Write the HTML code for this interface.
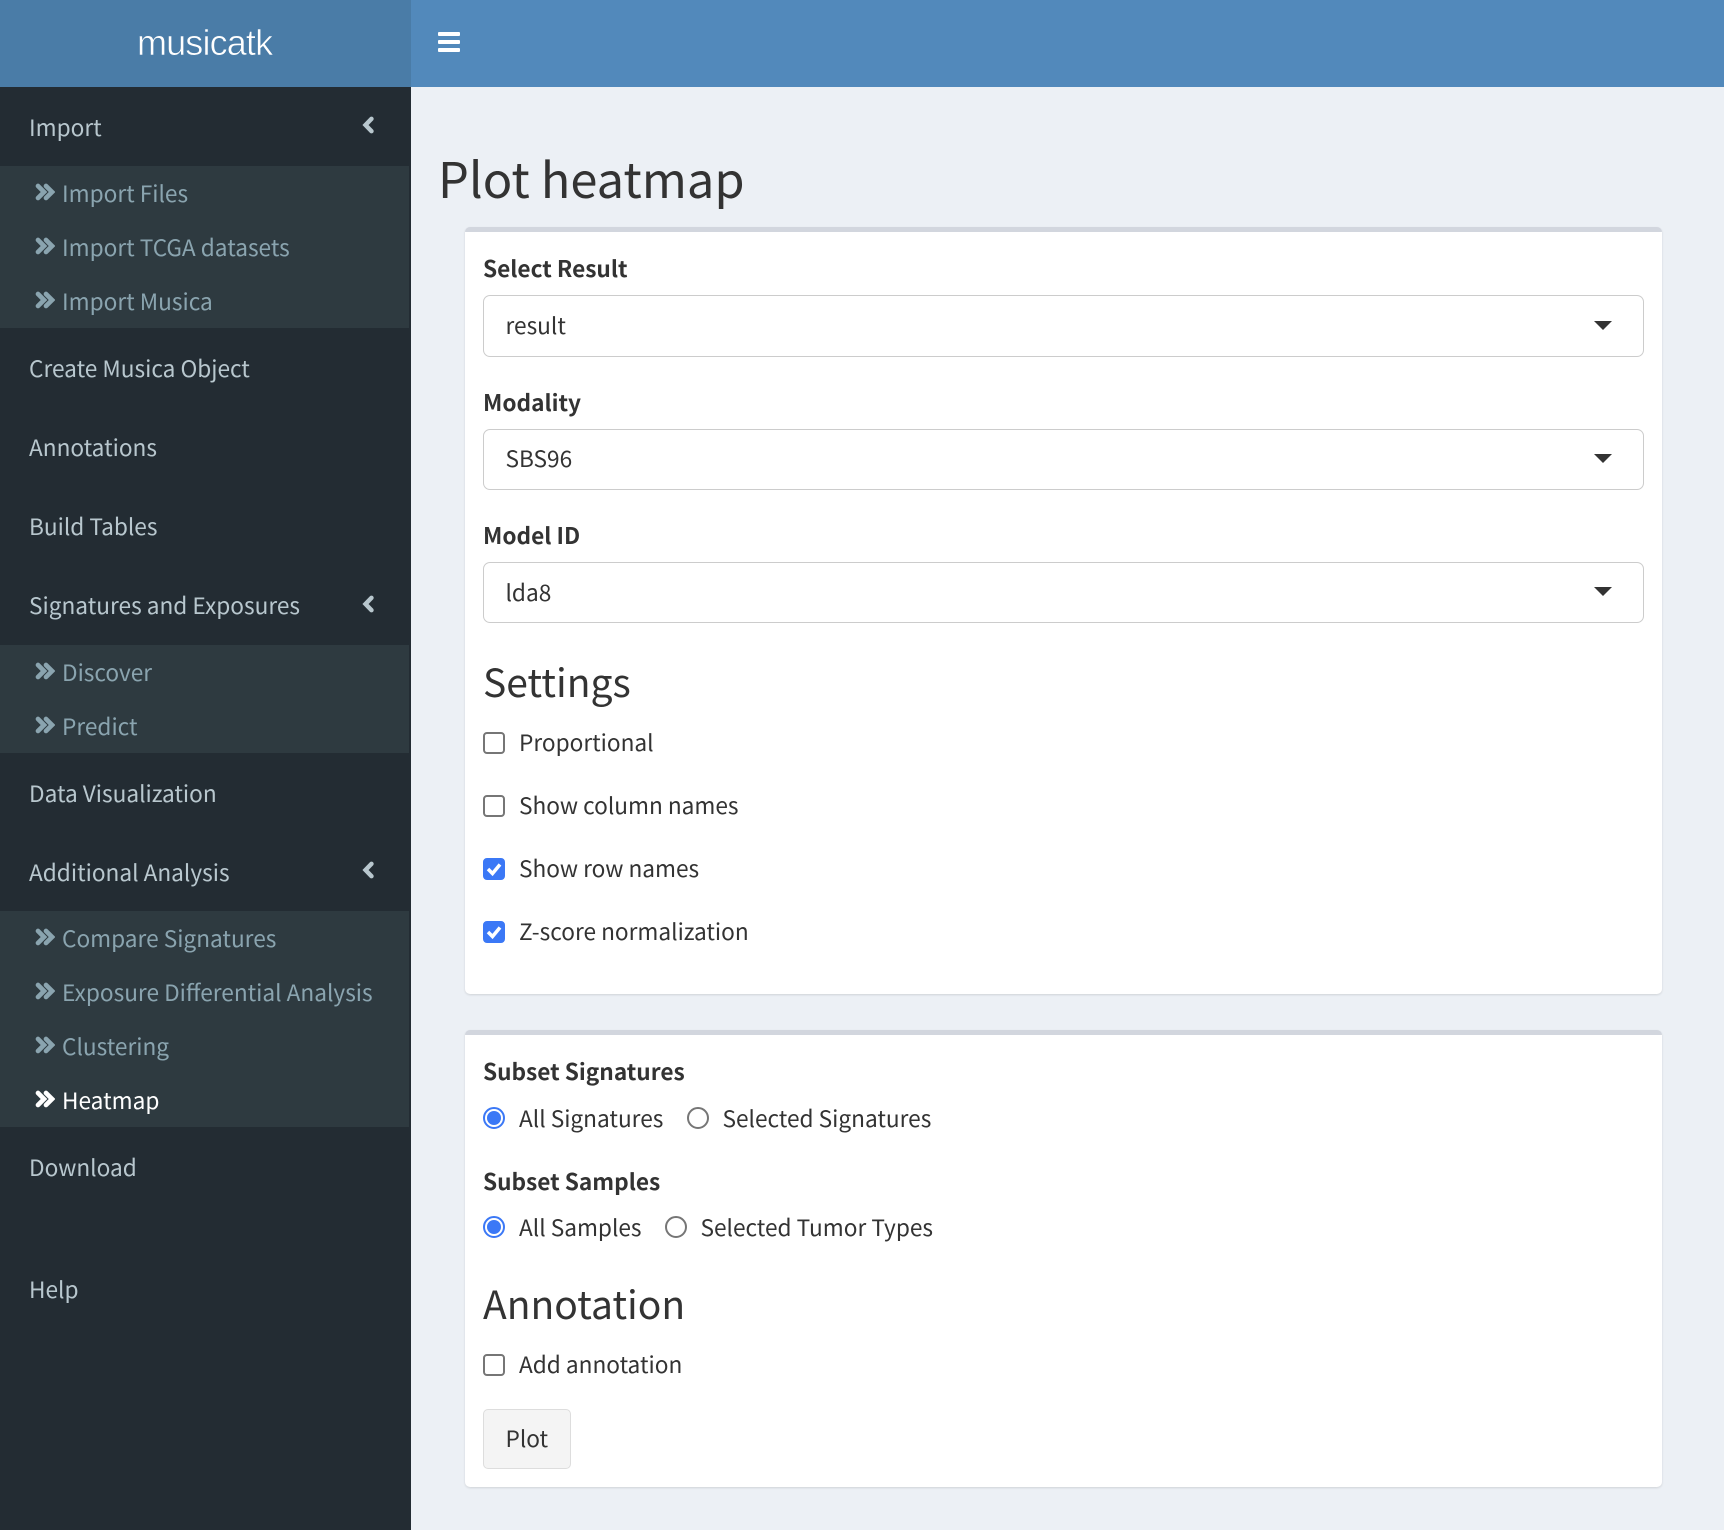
<!DOCTYPE html>
<html><head><meta charset="utf-8"><title>musicatk</title>
<style>
html,body{margin:0;padding:0}
body{width:1724px;height:1530px;position:relative;overflow:hidden;background:#ecf0f5;font-family:"Noto Sans CJK JP","Liberation Sans",sans-serif;font-size:22.65px;color:#333}
.a{position:absolute}
.t{position:absolute;white-space:nowrap;line-height:40px;height:40px}
.m{left:29px;color:#b8c7ce}
.s{left:62px;color:#8aa4af}
.b{font-weight:700;left:483px;color:#333}
.sub{position:absolute;left:0;width:409px;background:#2e3a40}
.box{position:absolute;left:465px;width:1197px;background:#fff;border-top:5px solid #d2d6de;border-radius:5px;box-shadow:0 1px 2px rgba(0,0,0,.12);box-sizing:border-box}
.sel{position:absolute;left:483px;width:1161px;box-sizing:border-box;background:#fff;border:1.5px solid #ccc;border-radius:7px}
.arr{position:absolute;left:1594px;width:0;height:0;border-left:9px solid transparent;border-right:9px solid transparent;border-top:9px solid #333}
.cb{position:absolute;left:483px;width:22px;height:22px;box-sizing:border-box;border:2px solid #767676;border-radius:4px;background:#fff}
.cb.on{background:#3b78f6;border-color:#3b78f6}
.cb svg{position:absolute;left:-2px;top:-2px}
.r{position:absolute;width:22px;height:22px;box-sizing:border-box;border:2px solid #767676;border-radius:50%;background:#fff}
.r.on{border-color:#3b78f6}
.r.on:after{content:"";position:absolute;left:2px;top:2px;width:14px;height:14px;border-radius:50%;background:#3b78f6}
svg{display:block}
</style></head><body>

<div class="a" style="left:411px;top:0;width:1313px;height:87px;background:#5289bb"></div>
<div class="a" style="left:0;top:0;width:411px;height:87px;background:#4a7ca7"></div>
<div class="t" style="left:137px;top:23px;font-family:'Liberation Sans',sans-serif;font-size:36px;letter-spacing:-.85px;color:#fff;-webkit-text-stroke:.6px #4a7ca7">musicatk</div>
<svg class="a" style="left:438px;top:32px" width="23" height="21" viewBox="0 0 23 21"><g fill="#fff"><rect width="22" height="4" y="0" rx="1"/><rect width="22" height="4" y="8" rx="1"/><rect width="22" height="4" y="16" rx="1"/></g></svg>

<div class="a" style="left:0;top:87px;width:411px;height:1443px;background:#232c33"></div>
<div class="sub" style="top:166px;height:162px"></div>
<div class="sub" style="top:645px;height:108px"></div>
<div class="sub" style="top:911px;height:216px"></div>

<div class="t m" style="top:107px">Import</div>
<div class="t s" style="top:173px">Import Files</div>
<div class="t s" style="top:227px">Import TCGA datasets</div>
<div class="t s" style="top:281px">Import Musica</div>
<div class="t m" style="top:348px">Create Musica Object</div>
<div class="t m" style="top:427px">Annotations</div>
<div class="t m" style="top:506px">Build Tables</div>
<div class="t m" style="top:585px">Signatures and Exposures</div>
<div class="t s" style="top:652px">Discover</div>
<div class="t s" style="top:706px">Predict</div>
<div class="t m" style="top:773px">Data Visualization</div>
<div class="t m" style="top:852px">Additional Analysis</div>
<div class="t s" style="top:918px">Compare Signatures</div>
<div class="t s" style="top:972px">Exposure Differential Analysis</div>
<div class="t s" style="top:1026px">Clustering</div>
<div class="t s" style="top:1080px;color:#fff">Heatmap</div>
<div class="t m" style="top:1147px">Download</div>
<div class="t m" style="top:1269px">Help</div>

<svg width="0" height="0" style="position:absolute"><defs>
<symbol id="dbl" viewBox="0 0 20 18"><path d="M3 3L9 9L3 15M11 3L17 9L11 15" fill="none" stroke="currentColor" stroke-width="4.700" stroke-linecap="round" stroke-linejoin="miter"/></symbol>
<symbol id="ang" viewBox="0 0 12 18"><path d="M9.500 2.800L3.500 9L9.500 15.200" fill="none" stroke="currentColor" stroke-width="4.400" stroke-linecap="round"/></symbol>
<symbol id="chk" viewBox="0 0 22 22"><path d="M5 11L9.500 15.500L17 6.500" fill="none" stroke="#fff" stroke-width="3.500"/></symbol>
</defs></svg>

<svg class="a" style="left:35px;top:183px;color:#8aa4af" width="20" height="18"><use href="#dbl"/></svg>
<svg class="a" style="left:35px;top:237px;color:#8aa4af" width="20" height="18"><use href="#dbl"/></svg>
<svg class="a" style="left:35px;top:291px;color:#8aa4af" width="20" height="18"><use href="#dbl"/></svg>
<svg class="a" style="left:35px;top:662px;color:#8aa4af" width="20" height="18"><use href="#dbl"/></svg>
<svg class="a" style="left:35px;top:716px;color:#8aa4af" width="20" height="18"><use href="#dbl"/></svg>
<svg class="a" style="left:35px;top:928px;color:#8aa4af" width="20" height="18"><use href="#dbl"/></svg>
<svg class="a" style="left:35px;top:982px;color:#8aa4af" width="20" height="18"><use href="#dbl"/></svg>
<svg class="a" style="left:35px;top:1036px;color:#8aa4af" width="20" height="18"><use href="#dbl"/></svg>
<svg class="a" style="left:35px;top:1090px;color:#fff" width="20" height="18"><use href="#dbl"/></svg>
<svg class="a" style="left:362px;top:116px;color:#b8c7ce" width="12" height="18"><use href="#ang"/></svg>
<svg class="a" style="left:362px;top:595px;color:#b8c7ce" width="12" height="18"><use href="#ang"/></svg>
<svg class="a" style="left:362px;top:861px;color:#b8c7ce" width="12" height="18"><use href="#ang"/></svg>

<div class="t" style="left:438px;top:158px;font-size:48.800px">Plot heatmap</div>

<div class="box" style="top:227px;height:767px"></div>
<div class="box" style="top:1030px;height:457px"></div>

<div class="t b" style="top:248px">Select Result</div>
<div class="sel" style="top:295px;height:62px"></div>
<div class="t" style="left:505.500px;top:305px">result</div>
<div class="arr" style="top:321px"></div>

<div class="t b" style="top:382px">Modality</div>
<div class="sel" style="top:429px;height:61px"></div>
<div class="t" style="left:505.500px;top:438px">SBS96</div>
<div class="arr" style="top:454px"></div>

<div class="t b" style="top:515px">Model ID</div>
<div class="sel" style="top:562px;height:61px"></div>
<div class="t" style="left:505.500px;top:572px">lda8</div>
<div class="arr" style="top:587px"></div>

<div class="t" style="left:483px;top:661px;font-size:39px">Settings</div>

<div class="cb" style="top:732px"></div>
<div class="t" style="left:519px;top:722px">Proportional</div>
<div class="cb" style="top:795px"></div>
<div class="t" style="left:519px;top:785px">Show column names</div>
<div class="cb on" style="top:858px"><svg width="22" height="22"><use href="#chk"/></svg></div>
<div class="t" style="left:519px;top:848px">Show row names</div>
<div class="cb on" style="top:921px"><svg width="22" height="22"><use href="#chk"/></svg></div>
<div class="t" style="left:519px;top:911px">Z-score normalization</div>

<div class="t b" style="top:1051px">Subset Signatures</div>
<div class="r on" style="left:483px;top:1107px"></div>
<div class="t" style="left:519px;top:1098px">All Signatures</div>
<div class="r" style="left:687px;top:1107px"></div>
<div class="t" style="left:722.500px;top:1098px">Selected Signatures</div>

<div class="t b" style="top:1161px">Subset Samples</div>
<div class="r on" style="left:483px;top:1216px"></div>
<div class="t" style="left:519px;top:1207px">All Samples</div>
<div class="r" style="left:665px;top:1216px"></div>
<div class="t" style="left:700.500px;top:1207px">Selected Tumor Types</div>

<div class="t" style="left:483px;top:1283px;font-size:39px">Annotation</div>
<div class="cb" style="top:1354px"></div>
<div class="t" style="left:519px;top:1344px">Add annotation</div>

<div class="a" style="left:483px;top:1409px;width:88px;height:60px;box-sizing:border-box;background:#f4f4f4;border:1px solid #ddd;border-radius:5px"></div>
<div class="t" style="left:505.500px;top:1418px">Plot</div>
</body></html>
